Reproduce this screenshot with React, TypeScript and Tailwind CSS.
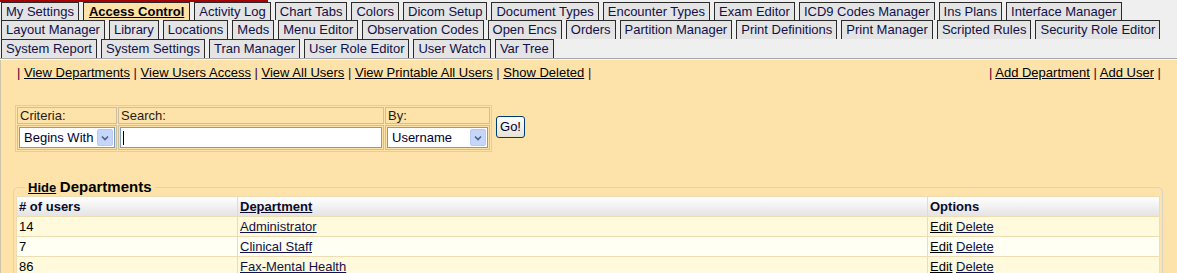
import React from 'react';

const rows: string[][] = [
    ['My Settings', 'Access Control', 'Activity Log', 'Chart Tabs', 'Colors', 'Dicom Setup', 'Document Types', 'Encounter Types', 'Exam Editor', 'ICD9 Codes Manager', 'Ins Plans', 'Interface Manager'],
    ['Layout Manager', 'Library', 'Locations', 'Meds', 'Menu Editor', 'Observation Codes', 'Open Encs', 'Orders', 'Partition Manager', 'Print Definitions', 'Print Manager', 'Scripted Rules', 'Security Role Editor'],
    ['System Report', 'System Settings', 'Tran Manager', 'User Role Editor', 'User Watch', 'Var Tree'],
];

const leftLinks = ['View Departments', 'View Users Access', 'View All Users', 'View Printable All Users', 'Show Deleted'];
const rightLinks = ['Add Department', 'Add User'];

const departments = [
    { users: 14, name: 'Administrator' },
    { users: 7, name: 'Clinical Staff' },
    { users: 86, name: 'Fax-Mental Health' },
];

const Tab = ({ label }: { label: string }) => {
    const active = label === 'Access Control';
    return (
        <div
            className={
                active
                    ? 'h-full border border-b-0 border-[#2a2a2a] bg-[#ffe2a8] px-[5px] text-[13px] leading-[17px] font-bold underline'
                    : 'h-full border border-b-0 border-[#2a2a2a] bg-[#e4e4e4] px-[4px] text-[13px] leading-[17px] text-[#10104a]'
            }
        >
            {label}
        </div>
    );
};

const Chevron = () => (
    <div className="flex h-[17px] w-[16px] items-center justify-center rounded-[2px] border border-[#b9cbf3] bg-[#c6d6fb]">
        <svg width="8" height="6" viewBox="0 0 8 6">
            <path d="M1 1.5 L4 4.5 L7 1.5" stroke="#4d6185" strokeWidth="1.6" fill="none" />
        </svg>
    </div>
);

const Select = ({ value, width }: { value: string; width: string }) => (
    <div className={`flex h-[21px] items-center justify-between border border-[#7f9db9] bg-white pl-[4px] pr-[1px] ${width}`}>
        <span className="text-[13px] text-[#000030]">{value}</span>
        <Chevron />
    </div>
);

const Pipe = () => <span className="text-[#4a0030]"> | </span>;

const App: React.FC = () => {
    return (
        <div className="h-[273px] w-[1177px] overflow-hidden bg-[#efefef] font-['Liberation_Sans',Arial,sans-serif] text-black">
            <div className="h-[2px] w-[268px] bg-[#a80000]" />
            <div className="pl-[1px]">
                {rows.map((row, i) => (
                    <div key={i} className={i === 0 ? 'flex h-[18px] gap-[4px]' : 'flex h-[19px] gap-[4px]'}>
                        {row.map((t) => (
                            <Tab key={t} label={t} />
                        ))}
                    </div>
                ))}
            </div>
            <div className="h-[2px] border-t border-[#a8a8a8] bg-[#f8f8f8]" />

            <div className="h-[213px] border-l border-[#cfc4a6] bg-[#fde3a9] pt-[4px] text-[13px]">
                <div className="flex justify-between pl-[16px] pr-[16px] leading-[17px]">
                    <div>
                        <span className="text-[#4a0030]">| </span>
                        {leftLinks.map((l, i) => (
                            <React.Fragment key={l}>
                                <a className="underline">{l}</a>
                                {i < leftLinks.length - 1 ? <Pipe /> : <span className="text-[#4a0030]"> |</span>}
                            </React.Fragment>
                        ))}
                    </div>
                    <div>
                        <span className="text-[#4a0030]">| </span>
                        {rightLinks.map((l, i) => (
                            <React.Fragment key={l}>
                                <a className="underline">{l}</a>
                                {i < rightLinks.length - 1 ? <Pipe /> : <span className="text-[#4a0030]"> |</span>}
                            </React.Fragment>
                        ))}
                    </div>
                </div>

                <div className="mt-[24px] flex items-start pl-[14px]">
                    <table className="border-separate border-spacing-[1px] border border-[#d9ceb0] bg-[#fde3a9]">
                        <tbody>
                            <tr className="h-[16px] text-[13px] leading-[15px] text-[#2a1a10]">
                                <td className="w-[100px] border border-[#cbbf9f] px-[2px]">Criteria:</td>
                                <td className="w-[266px] border border-[#cbbf9f] px-[2px]">Search:</td>
                                <td className="w-[105px] border border-[#cbbf9f] px-[2px]">By:</td>
                            </tr>
                            <tr className="h-[24px]">
                                <td className="border border-[#cbbf9f] p-[1px]">
                                    <Select value="Begins With" width="w-[96px]" />
                                </td>
                                <td className="border border-[#cbbf9f] p-[1px]">
                                    <div className="flex h-[21px] items-center border border-[#7f9db9] bg-white pl-[2px]">
                                        <div className="h-[14px] w-[1px] bg-black" />
                                    </div>
                                </td>
                                <td className="border border-[#cbbf9f] p-[1px]">
                                    <Select value="Username" width="w-[101px]" />
                                </td>
                            </tr>
                        </tbody>
                    </table>
                    <button className="mt-[11px] ml-[4px] h-[22px] w-[29px] rounded-[3px] border border-[#003c74] bg-gradient-to-b from-white to-[#e6e3d6] text-[13px] text-[#000030]">
                        Go!
                    </button>
                </div>

                <fieldset className="mt-[27px] mr-[14px] ml-[12px] rounded-[5px] border border-[#d8d4c4] px-[2px]">
                    <legend className="ml-[9px] px-[3px] leading-[16px]">
                        <a className="text-[13px] font-bold underline">Hide</a>{' '}
                        <span className="text-[15px] font-bold">Departments</span>
                    </legend>
                    <table className="w-full border-separate border-spacing-[1px] bg-[#efdcb4] text-[13px] leading-[17px]">
                        <thead>
                            <tr className="h-[19px] bg-gradient-to-b from-white to-[#e4e4e4] text-left font-bold text-[#0a0a2a]">
                                <th className="w-[220px] px-[2px]"># of users</th>
                                <th className="px-[2px]">
                                    <a className="underline">Department</a>
                                </th>
                                <th className="w-[231px] px-[2px]">Options</th>
                            </tr>
                        </thead>
                        <tbody>
                            {departments.map((d, i) => (
                                <tr key={d.name} className={i % 2 === 0 ? 'h-[19px] bg-[#fffadb]' : 'h-[19px] bg-[#fffff3]'}>
                                    <td className="px-[2px]">{d.users}</td>
                                    <td className="px-[2px]">
                                        <a className="text-[#10104a] underline">{d.name}</a>
                                    </td>
                                    <td className="px-[2px]">
                                        <a className="underline">Edit</a> <a className="text-[#10104a] underline">Delete</a>
                                    </td>
                                </tr>
                            ))}
                        </tbody>
                    </table>
                </fieldset>
            </div>
        </div>
    );
};

export default App;
